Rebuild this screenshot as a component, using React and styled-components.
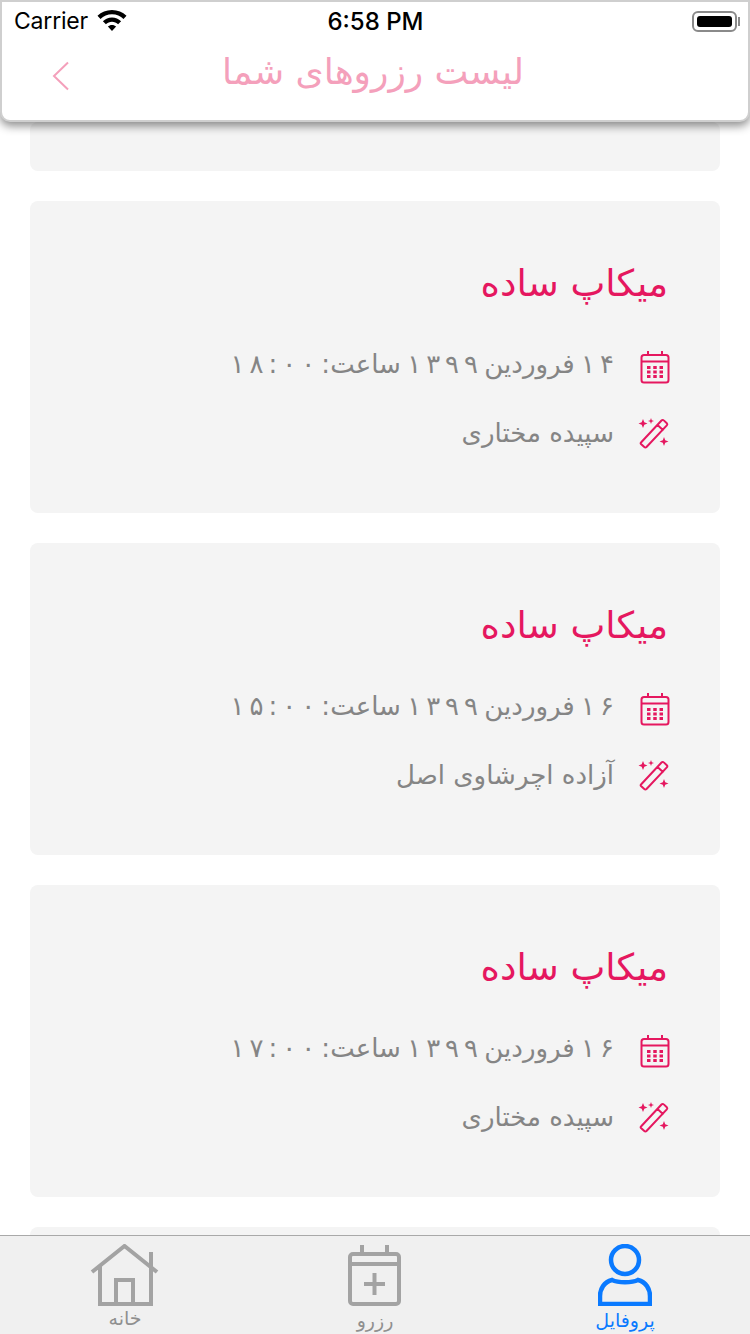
import React from "react";
import styled, {createGlobalStyle} from "styled-components";

const bookings = [
  {id: 1, title: "میکاپ ساده", date: "۱۴ فروردین ۱۳۹۹ ساعت: ۱۸:۰۰", artist: "سپیده مختاری"},
  {id: 2, title: "میکاپ ساده", date: "۱۶ فروردین ۱۳۹۹ ساعت: ۱۵:۰۰", artist: "آزاده اچرشاوی اصل"},
  {id: 3, title: "میکاپ ساده", date: "۱۶ فروردین ۱۳۹۹ ساعت: ۱۷:۰۰", artist: "سپیده مختاری"},
];

const CalendarIcon = () => (
  <svg width="30" height="34" viewBox="0 0 30 34" fill="none" stroke="#e5175f" strokeWidth="2">
    <rect x="1.500" y="5" width="27" height="27.500" rx="2.500" />
    <path d="M1.500 11.500H28.500M8 1V5M22 1V5" />
    <path d="M7 17.500h3.500M13.250 17.500h3.500M19.500 17.500h3.500M7 22h3.500M13.250 22h3.500M19.500 22h3.500M7 26.500h3.500M13.250 26.500h3.500M19.500 26.500h3.500" strokeWidth="3" />
  </svg>
);

const WandIcon = () => (
  <svg width="32" height="32" viewBox="0 0 32 32" fill="none" stroke="#e5175f" strokeWidth="2">
    <path d="M3 25.500L23.500 3.500c.8-.8 1.600-.8 2.300-.1l3 2.800c.7.700.7 1.400 0 2.200L8.500 30c-.7.700-1.500.700-2.200 0l-3.300-3c-.5-.5-.5-1 0-1.500zM19.500 8l6 5.500" />
    <path fill="#e5175f" stroke="none" d="M5 2l1.300 3.200L9.500 6.500 6.300 7.800 5 11 3.700 7.800.5 6.500l3.200-1.300zM13 1l.8 2.200L16 4l-2.200.8L13 7l-.8-2.200L10 4l2.200-.8zM26 20l1.200 3.300 3.300 1.200-3.300 1.200L26 29l-1.200-3.300-3.300-1.200 3.300-1.200z" />
  </svg>
);

// letter-spacing does nothing on these digits, so each one gets its own box
const spacedDigits = (text) =>
  text.split(/([۰-۹:]*[۰-۹][۰-۹:]*)/).map((part, i) =>
    i % 2 ? (
      <Digits key={i} dir="ltr">
        {[...part].map((digit, j) => <span key={j}>{digit}</span>)}
      </Digits>
    ) : part
  );

const App = () => {
  return (
    <Screen>
      <GlobalStyle />
      <Header>
        <StatusBar>
          <Carrier>
            Carrier
            <svg width="30" height="22" viewBox="0 0 30 22" fill="#000">
              <path d="M15 0C9.300 0 4.300 2.200.5 5.800l3 3.200C6.500 6.100 10.500 4.300 15 4.300S23.500 6.100 26.500 9l3-3.200C25.700 2.200 20.700 0 15 0z" />
              <path d="M15 7.500c-3.500 0-6.700 1.400-9.100 3.700l3 3.100c1.600-1.500 3.800-2.500 6.100-2.500s4.500 1 6.100 2.500l3-3.100c-2.400-2.300-5.600-3.700-9.100-3.700z" />
              <path d="M15 15c-1.600 0-3 .6-4.100 1.600L15 21l4.100-4.400C18 15.600 16.600 15 15 15z" />
            </svg>
          </Carrier>
          <Clock>6:58 PM</Clock>
          <Battery>
            <BatteryFill />
          </Battery>
        </StatusBar>
        <NavBar>
          <BackButton>
            <svg width="18" height="30" viewBox="0 0 18 30" fill="none" stroke="#f4a0bb" strokeWidth="2">
              <path d="M16 1.500L2 15l14 13.500" />
            </svg>
          </BackButton>
          <Title dir="rtl">لیست رزروهای شما</Title>
        </NavBar>
      </Header>

      <List>
        <CardEdge $height={49} />
        {bookings.map(booking => (
          <Card key={booking.id} dir="rtl">
            <CardTitle>{booking.title}</CardTitle>
            <InfoRow>
              <IconSlot><CalendarIcon /></IconSlot>
              <DateText>{spacedDigits(booking.date)}</DateText>
            </InfoRow>
            <InfoRow>
              <IconSlot><WandIcon /></IconSlot>
              <InfoText>{booking.artist}</InfoText>
            </InfoRow>
          </Card>
        ))}
        <CardEdge $height={30} />
      </List>

      <TabBar>
        <Tab>
          <svg width="70" height="62" viewBox="0 0 70 62" fill="none" stroke="#a3a3a3" strokeWidth="4">
            <path d="M2 28L34.500 2 67 28M10 21V60H61V8M10 60H61M26 60V36H43V60" />
          </svg>
          <TabLabel>خانه</TabLabel>
        </Tab>
        <Tab>
          <svg width="54" height="62" viewBox="0 0 54 62" fill="none" stroke="#a3a3a3" strokeWidth="4">
            <rect x="2" y="10" width="49" height="50" rx="3" />
            <path d="M2 20H51M14 1V10M39 1V10M26.500 29V51M16 40H37" />
          </svg>
          <TabLabel $offset={2}>رزرو</TabLabel>
        </Tab>
        <Tab>
          <svg width="54" height="62" viewBox="0 0 54 62" fill="none" stroke="#0a7aff" strokeWidth="4.500">
            <ellipse cx="27" cy="16" rx="14" ry="14" />
            <path d="M14 36c6 3 20 3 26 0 8 2 12 9 12 16v8H2v-8c0-7 4-14 12-16z" />
          </svg>
          <TabLabel $active $offset={2}>پروفایل</TabLabel>
        </Tab>
      </TabBar>
    </Screen>
  );
};

const GlobalStyle = createGlobalStyle`
  html, body {
    margin: 0;
    padding: 0;
    background: #fff;
  }
  * {
    box-sizing: border-box;
  }
`;

const Screen = styled.div`
  width: 750px;
  height: 1334px;
  display: flex;
  flex-direction: column;
  overflow: hidden;
  background: #fff;
  font-family: "DejaVu Sans", sans-serif;
`;

const Header = styled.header`
  height: 122px;
  flex-shrink: 0;
  position: relative;
  z-index: 2;
  display: flex;
  flex-direction: column;
  background: #fff;
  border: 2px solid #cfcfcf;
  border-radius: 0 0 10px 10px;
  box-shadow: 0 4px 10px rgba(0, 0, 0, 0.45);
`;

const StatusBar = styled.div`
  height: 38px;
  display: grid;
  grid-template-columns: 1fr auto 1fr;
  align-items: center;
  padding: 0 11px 0 12px;
  font-family: Inter, "Liberation Sans", sans-serif;
  color: #000;
`;

const Carrier = styled.div`
  display: flex;
  align-items: center;
  gap: 9px;
  font-size: 23px;
  letter-spacing: -0.2px;
`;

const Clock = styled.div`
  font-size: 24px;
  font-weight: 500;
`;

const Battery = styled.div`
  justify-self: end;
  position: relative;
  width: 45px;
  height: 21px;
  padding: 3px;
  border: 2px solid #8a8a8a;
  border-radius: 6px;

  &::after {
    content: "";
    position: absolute;
    top: 4px;
    right: -5px;
    width: 2px;
    height: 9px;
    background: #8a8a8a;
  }
`;

const BatteryFill = styled.div`
  width: 100%;
  height: 100%;
  border-radius: 3px;
  background: #000;
`;

const NavBar = styled.div`
  flex: 1;
  display: flex;
  align-items: center;
  padding: 0 0 8px 50px;
`;

const BackButton = styled.div`
  width: 18px;
  height: 30px;
`;

const Title = styled.div`
  width: 606px;
  margin-top: -10px;
  text-align: center;
  font-size: 36px;
  color: #f4a0bb;
`;

const List = styled.div`
  flex: 1;
  min-height: 0;
  overflow: hidden;
  display: flex;
  flex-direction: column;
  gap: 30px;
  padding: 0 30px;
`;

const CardEdge = styled.div`
  height: ${props => props.$height}px;
  flex-shrink: 0;
  background: #f4f4f4;
  border-radius: 8px;
`;

const Card = styled.article`
  height: 312px;
  flex-shrink: 0;
  display: flex;
  flex-direction: column;
  padding: 60px 50px 0 20px;
  background: #f4f4f4;
  border-radius: 8px;
`;

const CardTitle = styled.h2`
  margin: 0 2px 27px 0;
  font-size: 37px;
  line-height: 46px;
  font-weight: 400;
  color: #e5175f;
`;

const InfoRow = styled.div`
  display: flex;
  align-items: center;
  height: 66px;
`;

const IconSlot = styled.div`
  width: 56px;
  flex-shrink: 0;
  display: flex;
  align-items: center;
  justify-content: flex-start;
`;

const InfoText = styled.span`
  font-size: 26px;
  color: #858585;
  white-space: nowrap;
`;

const DateText = styled(InfoText)`
  margin-top: -6px;
  word-spacing: -2px;
`;

const Digits = styled.span`
  display: inline-flex;
  gap: 5px;
`;

const TabBar = styled.nav`
  height: 99px;
  flex-shrink: 0;
  display: grid;
  grid-template-columns: repeat(3, 1fr);
  padding-top: 8px;
  background: #f0f0f0;
  border-top: 1px solid #a9a9a9;
`;

const Tab = styled.div`
  display: flex;
  flex-direction: column;
  align-items: center;
`;

const TabLabel = styled.span`
  margin-top: ${props => props.$offset || 0}px;
  font-size: 19px;
  line-height: 24px;
  color: ${props => (props.$active ? "#0a7aff" : "#8f8f8f")};
`;

export default App;
